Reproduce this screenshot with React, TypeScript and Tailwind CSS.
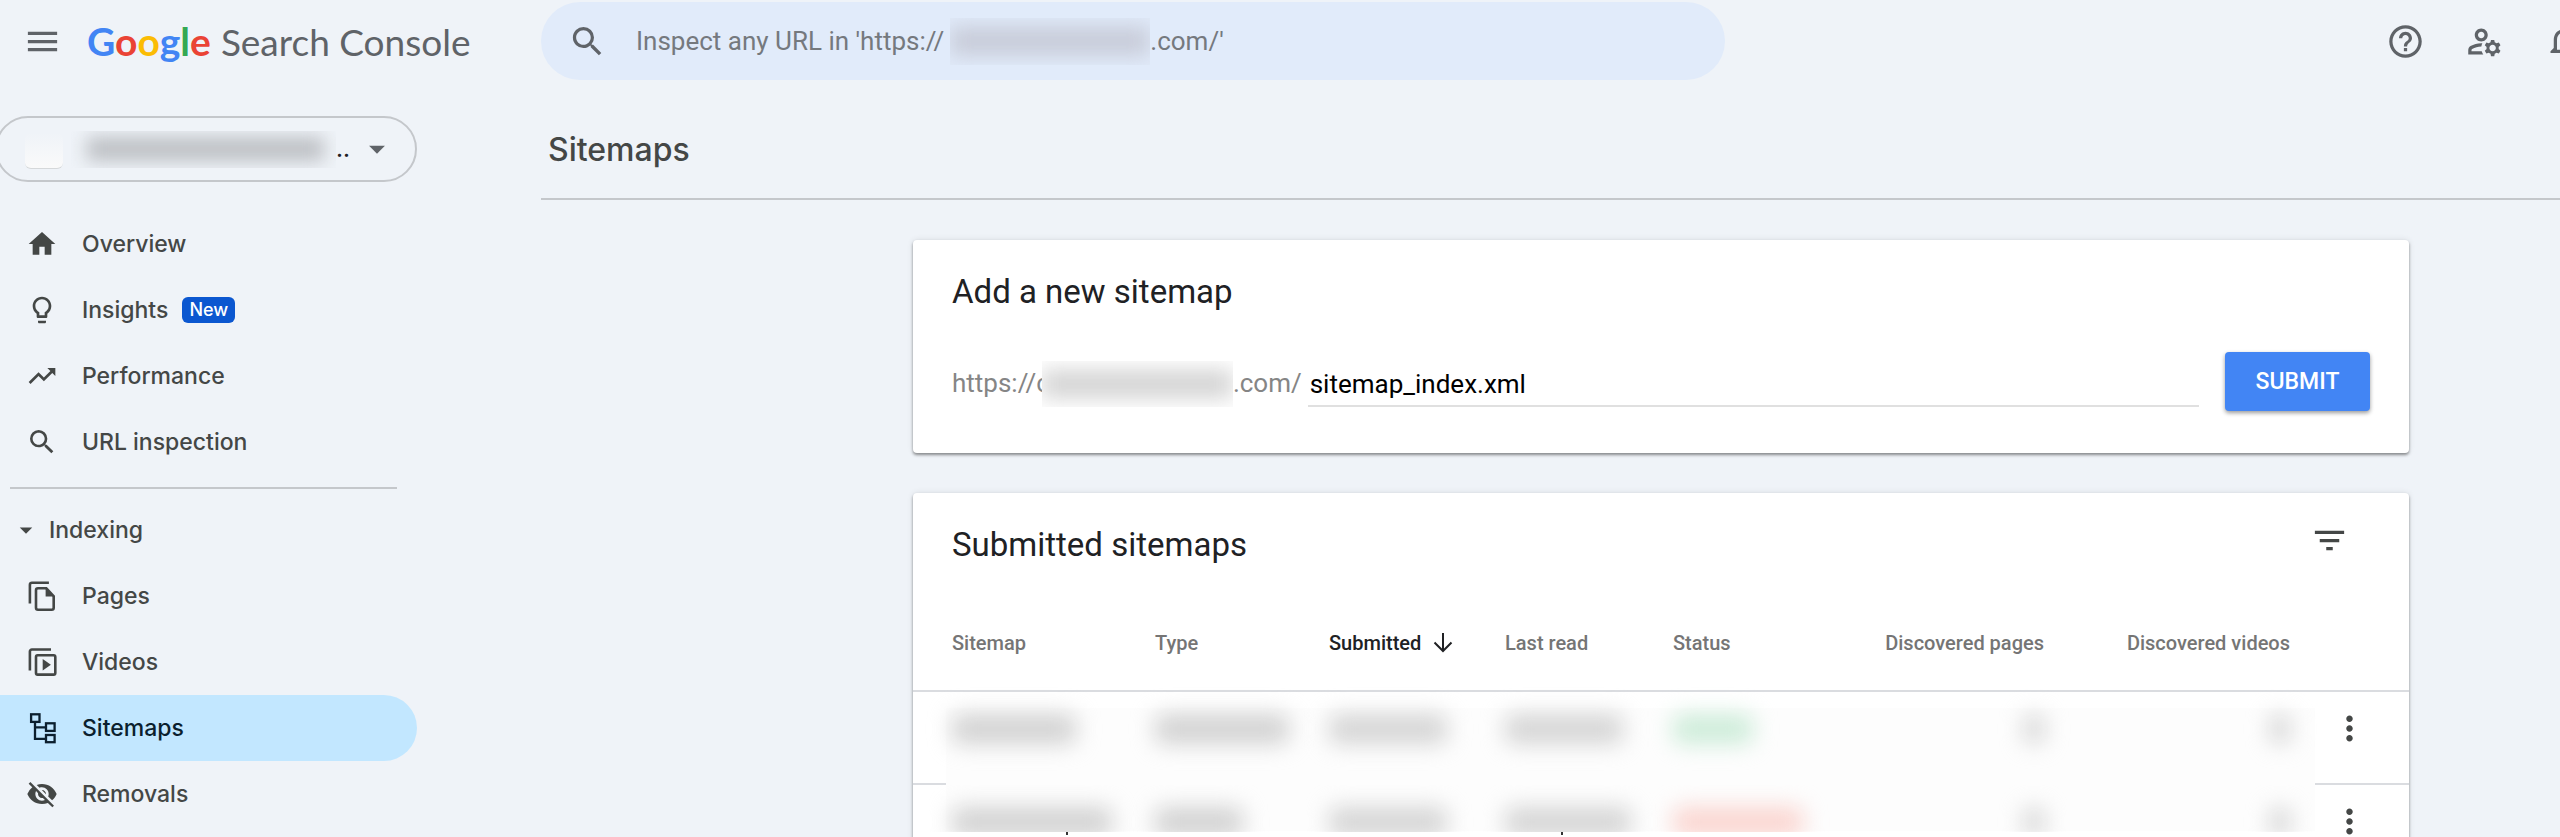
import type { ReactNode } from 'react'
import {
    MdArrowDropDown,
    MdFilterList,
    MdHelpOutline,
    MdHome,
    MdLightbulbOutline,
    MdMenu,
    MdMoreVert,
    MdNotificationsNone,
    MdOutlineManageAccounts,
    MdSearch,
    MdTrendingUp,
    MdVisibilityOff,
} from 'react-icons/md'

type NavItemProps = {
    icon: ReactNode
    label: string
    badge?: string
    active?: boolean
}

type RedactedProps = {
    className: string
    cut?: boolean
    tick?: string
}

const logoLetters = [
    { letter: 'G', color: 'text-[#4285f4]' },
    { letter: 'o', color: 'text-[#ea4335]' },
    { letter: 'o', color: 'text-[#fbbc04]' },
    { letter: 'g', color: 'text-[#4285f4]' },
    { letter: 'l', color: 'text-[#34a853]' },
    { letter: 'e', color: 'text-[#ea4335]' },
]

function PagesIcon() {
    return (
        <svg width={32} height={32} viewBox="0 0 32 32" fill="none" stroke="currentColor" strokeWidth={2.6}>
            <path d="M3.9 23.4V4.7a2 2 0 0 1 2-2h17" />
            <path d="M12 8.3h8.3l7.4 7.9v11.6a2 2 0 0 1-2 2H12a2 2 0 0 1-2-2V10.3a2 2 0 0 1 2-2z" />
            <path d="M19.6 8.3v8.2h8z" fill="currentColor" stroke="none" />
        </svg>
    )
}

function VideosIcon() {
    return (
        <svg width={32} height={32} viewBox="0 0 32 32" fill="none" stroke="currentColor" strokeWidth={2.6}>
            <path d="M3.9 24.4V5.5a2 2 0 0 1 2-2H25" />
            <rect x={10} y={9.3} width={19.3} height={19.3} rx={1.6} />
            <path d="M16.7 13v11.6l8.2-5.8z" fill="currentColor" stroke="none" />
        </svg>
    )
}

function SitemapsIcon() {
    return (
        <svg width={32} height={32} viewBox="0 0 32 32" fill="none" stroke="currentColor" strokeWidth={2.3}>
            <rect x={5.1} y={2.3} width={8.4} height={7.6} />
            <rect x={20} y={11.3} width={8.6} height={7.6} />
            <rect x={20} y={23} width={8.6} height={7.2} />
            <path d="M9 10v16.9h11M9 15.3h11" />
        </svg>
    )
}

function SortArrow() {
    return (
        <svg width={20} height={20} viewBox="0 0 20 20" fill="none" stroke="currentColor" strokeWidth={2}>
            <path d="M10 0v17.5M1.5 9.5l8.5 8.5 8.5-8.5" />
        </svg>
    )
}

function NavItem({ icon, label, badge, active }: NavItemProps) {
    return (
        <a
            href="#"
            className={`flex h-[66px] w-[417px] items-center gap-6 rounded-r-full pl-[26px] ${
                active ? 'bg-[#c2e7ff] text-[#0b1f2e]' : 'text-[#444746]'
            }`}
        >
            {icon}
            <span className="flex items-center gap-[14px]">
                {label}
                {badge && (
                    <span className="rounded-md bg-[#0b57d0] px-[7px] text-[18px] leading-[26px] text-white">
                        {badge}
                    </span>
                )}
            </span>
        </a>
    )
}

function Redacted({ className, cut, tick }: RedactedProps) {
    return (
        <div className="relative z-10 h-[91px]">
            <div className={`-mx-6 px-6 pt-[22px] ${cut ? 'h-[47px] overflow-hidden' : ''}`}>
                <div className={`h-[30px] rounded-lg blur-[11px] ${className}`} />
            </div>
            {tick && <div className={`h-[3px] w-[2px] bg-[#333] ${tick}`} />}
        </div>
    )
}

export default function App() {
    return (
        <div className="h-screen overflow-hidden bg-[#eff3f8] font-[Roboto,sans-serif] text-[#202124]">
            <header className="flex h-[82px] items-center text-[#5f6368]">
                <div className="flex w-[541px] shrink-0 items-center">
                    <button aria-label="Main menu" className="ml-[23px]">
                        <MdMenu size={39} />
                    </button>
                    <a href="#" className="ml-[25px] flex items-baseline gap-[10px] font-[Lato,sans-serif] text-[37px] leading-[46px]">
                        <span className="text-[39px] font-bold">
                            {logoLetters.map(({ letter, color }, i) => (
                                <span key={i} className={color}>
                                    {letter}
                                </span>
                            ))}
                        </span>
                        <span>Search Console</span>
                    </a>
                </div>
                <label className="flex h-[78px] max-w-[1184px] flex-1 items-center gap-[29px] rounded-full bg-[#e1ebfa] pl-[27px] text-[26px]">
                    <MdSearch size={39} />
                    <span className="flex items-center text-[#75797e]">
                        Inspect any URL in 'https://
                        <span className="ml-[6px] flex h-[47px] w-[200px] items-center overflow-hidden">
                            <span className="h-[30px] w-full bg-[#c8ccd9] blur-[10px]" />
                        </span>
                        .com/'
                    </span>
                    <input aria-label="Inspect any URL" className="min-w-0 flex-1 bg-transparent outline-none" />
                </label>
                <div className="-mr-[43px] ml-auto flex shrink-0">
                    <button aria-label="Help" className="flex w-[79px] justify-center">
                        <MdHelpOutline size={39} />
                    </button>
                    <button aria-label="User settings" className="flex w-[79px] justify-center">
                        <MdOutlineManageAccounts size={39} />
                    </button>
                    <button aria-label="Notifications" className="flex w-[79px] justify-center">
                        <MdNotificationsNone size={39} />
                    </button>
                </div>
            </header>

            <div className="flex">
                <aside className="w-[541px] shrink-0 pt-[34px] font-[Inter,sans-serif] text-[23px] font-medium">
                    <button
                        aria-label="Select property"
                        className="-ml-[5px] flex h-[66px] w-[422px] items-center rounded-full border-2 border-[#c4c7cb] pl-7 text-[#202124]"
                    >
                        <span className="mt-1 h-[36px] w-[38px] rounded-md border-b border-[#d5d8da] bg-gradient-to-b from-[#eff3f8] to-[#fafafa]" />
                        <span className="ml-2 flex h-[37px] w-[265px] items-center overflow-hidden pr-3 pl-4">
                            <span className="h-[24px] w-full bg-[#bcbfc3] blur-[9px]" />
                        </span>
                        <span>..</span>
                        <MdArrowDropDown size={38} className="ml-2 text-[#5f6368]" />
                    </button>

                    <nav className="mt-[29px]">
                        <NavItem icon={<MdHome size={32} />} label="Overview" />
                        <NavItem icon={<MdLightbulbOutline size={32} />} label="Insights" badge="New" />
                        <NavItem icon={<MdTrendingUp size={32} />} label="Performance" />
                        <NavItem icon={<MdSearch size={32} />} label="URL inspection" />
                        <hr className="mt-3 mb-2 ml-[10px] w-[387px] border-t-2 border-[#c4c7cb]" />
                        <button className="flex h-[66px] items-center gap-2 pl-[11px] text-[#444746]">
                            <MdArrowDropDown size={30} />
                            Indexing
                        </button>
                        <NavItem icon={<PagesIcon />} label="Pages" />
                        <NavItem icon={<VideosIcon />} label="Videos" />
                        <NavItem icon={<SitemapsIcon />} label="Sitemaps" active />
                        <NavItem icon={<MdVisibilityOff size={32} />} label="Removals" />
                    </nav>
                </aside>

                <main className="min-w-0 flex-1">
                    <div className="flex h-[118px] items-center border-b-2 border-[#c4c7cb] pt-5 pl-[7px]">
                        <h1 className="font-[Inter,sans-serif] text-[32px] font-medium text-[#444746]">Sitemaps</h1>
                    </div>

                    <div className="flex flex-col gap-10 pt-10 pr-[151px] pl-[372px]">
                        <section className="h-[213px] rounded-sm bg-white px-[39px] pt-[30px] shadow-[0_2px_3px_rgba(0,0,0,0.4),0_0_6px_rgba(0,0,0,0.1)]">
                            <h2 className="text-[33px] leading-[44px]">Add a new sitemap</h2>
                            <form className="mt-[38px] flex h-[59px] items-center text-[26px]">
                                <label htmlFor="sitemap-url" className="flex items-center pt-1 text-[#858585]">
                                    https://c
                                    <span className="relative -ml-2 flex h-[46px] w-[191px] items-center overflow-hidden bg-white">
                                        <span className="h-[30px] w-full bg-[#d6d6d6] blur-[10px]" />
                                    </span>
                                    .com/
                                </label>
                                <input
                                    id="sitemap-url"
                                    defaultValue="sitemap_index.xml"
                                    className="ml-[6px] h-[50px] min-w-0 flex-1 border-b-2 border-[#e0e0e0] pt-[6px] pl-[2px] text-black outline-none"
                                />
                                <button
                                    type="button"
                                    className="ml-[26px] h-[59px] w-[145px] rounded bg-[#4285f4] pt-[2px] text-[23px] font-medium text-white shadow-[0_2px_4px_rgba(0,0,0,0.4)]"
                                >
                                    SUBMIT
                                </button>
                            </form>
                        </section>

                        <section className="rounded-sm bg-white shadow-[0_2px_3px_rgba(0,0,0,0.4),0_0_6px_rgba(0,0,0,0.1)]">
                            <div className="flex h-[103px] items-center justify-between pr-[60px] pl-[39px]">
                                <h2 className="text-[33px] leading-[44px]">Submitted sitemaps</h2>
                                <button aria-label="Filter" className="pb-2 text-[#444746]">
                                    <MdFilterList size={39} />
                                </button>
                            </div>
                            <div className="relative">
                                <table className="w-full table-fixed text-left text-[20px]">
                                    <colgroup>
                                        <col className="w-[242px]" />
                                        <col className="w-[174px]" />
                                        <col className="w-[176px]" />
                                        <col className="w-[168px]" />
                                        <col className="w-[198px]" />
                                        <col className="w-[173px]" />
                                        <col className="w-[246px]" />
                                        <col className="w-[119px]" />
                                    </colgroup>
                                    <thead>
                                        <tr className="h-[95px] border-b-2 border-[#dadce0] text-[#757575]">
                                            <th className="pl-[39px] font-medium">Sitemap</th>
                                            <th className="font-medium">Type</th>
                                            <th className="font-medium text-[#202124]">
                                                <span className="flex items-center gap-3">
                                                    Submitted
                                                    <SortArrow />
                                                </span>
                                            </th>
                                            <th className="font-medium">Last read</th>
                                            <th className="font-medium">Status</th>
                                            <th className="text-right font-medium whitespace-nowrap">Discovered pages</th>
                                            <th className="text-right font-medium">Discovered videos</th>
                                            <th />
                                        </tr>
                                    </thead>
                                    <tbody>
                                        <tr className="border-b-2 border-[#dadce0]">
                                            <td className="pl-[39px]">
                                                <Redacted className="w-[124px] bg-[#d2d2d2]" />
                                            </td>
                                            <td>
                                                <Redacted className="w-[134px] bg-[#d2d2d2]" />
                                            </td>
                                            <td>
                                                <Redacted className="w-[118px] bg-[#d5d5d5]" />
                                            </td>
                                            <td>
                                                <Redacted className="w-[118px] bg-[#d5d5d5]" />
                                            </td>
                                            <td>
                                                <Redacted className="w-[80px] bg-[#cdecd9]" />
                                            </td>
                                            <td>
                                                <Redacted className="ml-auto w-[20px] bg-[#d5d5d5]" />
                                            </td>
                                            <td>
                                                <Redacted className="ml-auto w-[20px] bg-[#d5d5d5]" />
                                            </td>
                                            <td className="pb-[18px] pl-10">
                                                <button aria-label="More options" className="block text-[#444746]">
                                                    <MdMoreVert size={39} />
                                                </button>
                                            </td>
                                        </tr>
                                        <tr>
                                            <td className="pl-[39px]">
                                                <Redacted className="w-[160px] bg-[#d2d2d2]" cut tick="ml-[114px]" />
                                            </td>
                                            <td>
                                                <Redacted className="w-[88px] bg-[#d2d2d2]" cut />
                                            </td>
                                            <td>
                                                <Redacted className="w-[118px] bg-[#d5d5d5]" cut />
                                            </td>
                                            <td>
                                                <Redacted className="w-[126px] bg-[#d5d5d5]" cut tick="ml-[56px]" />
                                            </td>
                                            <td>
                                                <Redacted className="w-[130px] bg-[#fad5d0]" cut />
                                            </td>
                                            <td>
                                                <Redacted className="ml-auto w-[20px] bg-[#d5d5d5]" cut />
                                            </td>
                                            <td>
                                                <Redacted className="ml-auto w-[20px] bg-[#d5d5d5]" cut />
                                            </td>
                                            <td className="pb-[18px] pl-10">
                                                <button aria-label="More options" className="block text-[#444746]">
                                                    <MdMoreVert size={39} />
                                                </button>
                                            </td>
                                        </tr>
                                    </tbody>
                                </table>
                                {/* covers the row divider behind the hidden values */}
                                <div className="absolute top-[112px] right-[94px] bottom-[45px] left-[33px] bg-[#fdfdfd]" />
                            </div>
                        </section>
                    </div>
                </main>
            </div>
        </div>
    )
}
